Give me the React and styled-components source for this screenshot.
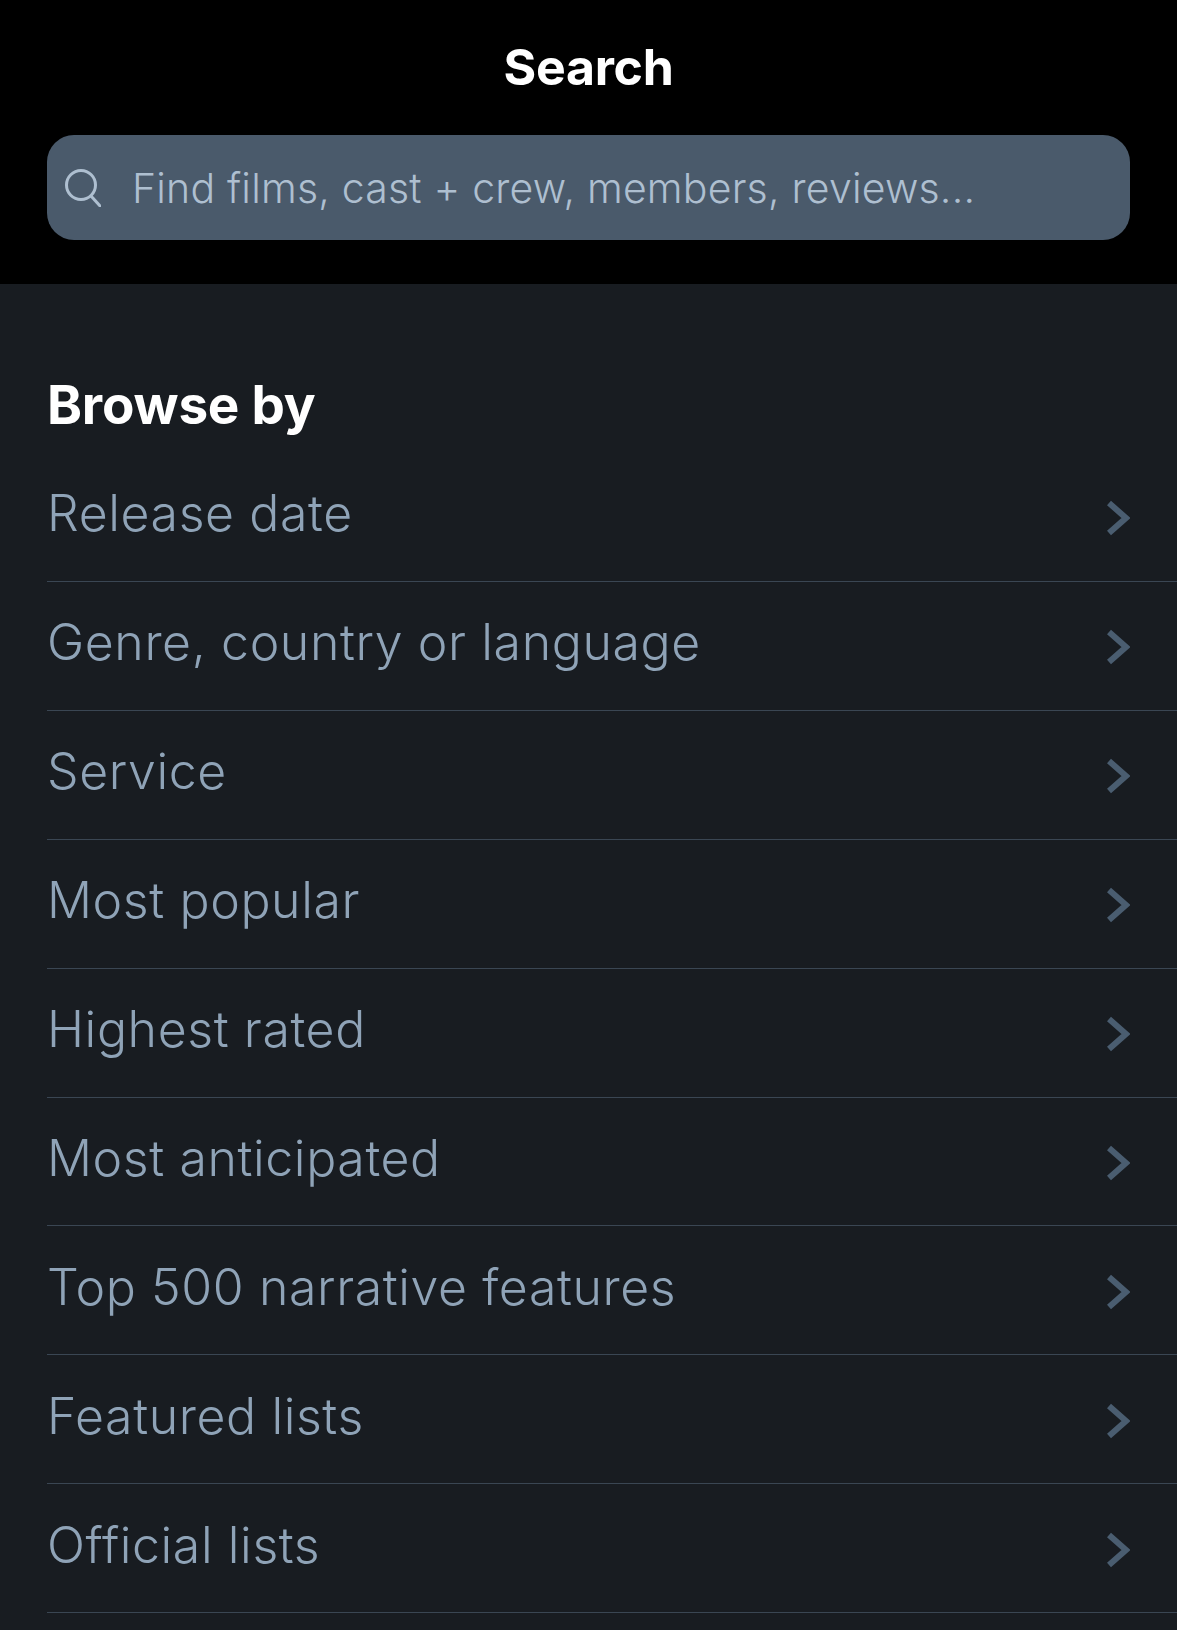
import React from 'react';
import styled, { createGlobalStyle } from 'styled-components';

const items = [
	'Release date',
	'Genre, country or language',
	'Service',
	'Most popular',
	'Highest rated',
	'Most anticipated',
	'Top 500 narrative features',
	'Featured lists',
	'Official lists',
];

const App = () => {
	return (
		<Page>
			<GlobalStyle />
			<Header>
				<Title>Search</Title>
				<SearchBar>
					<SearchIcon viewBox='0 0 36 38' fill='none'>
						<circle cx='16' cy='16' r='14.5' />
						<path d='M26 27 L36 38' />
					</SearchIcon>
					<Placeholder>Find films, cast + crew, members, reviews...</Placeholder>
				</SearchBar>
			</Header>
			<Content>
				<Heading>Browse by</Heading>
				<List>
					{items.map((item) => (
						<Row key={item}>
							<RowLabel>{item}</RowLabel>
							<Chevron viewBox='0 0 24 36' fill='none'>
								<path d='M3 3 L20 18 L3 33' />
							</Chevron>
						</Row>
					))}
				</List>
			</Content>
		</Page>
	);
};

export default App;

const GlobalStyle = createGlobalStyle`
	html, body {
		margin: 0;
		padding: 0;
		background: #181c21;
	}
`;

const Page = styled.div`
	width: 1177px;
	height: 1630px;
	overflow: hidden;
	font-family: Inter, 'Liberation Sans', sans-serif;
	background: #181c21;
`;

const Header = styled.header`
	height: 284px;
	box-sizing: border-box;
	padding-top: 35px;
	background: #000;
`;

const Title = styled.h1`
	margin: 0 0 35px;
	height: 65px;
	line-height: 65px;
	text-align: center;
	font-size: 50px;
	font-weight: 700;
	letter-spacing: -0.3px;
	color: #fff;
`;

const SearchBar = styled.div`
	display: flex;
	align-items: center;
	box-sizing: border-box;
	width: 1083px;
	height: 105px;
	margin-left: 47px;
	padding-left: 18px;
	border-radius: 27px;
	background: #4a5a6b;
`;

const SearchIcon = styled.svg`
	width: 36px;
	height: 38px;
	margin-right: 31px;
	flex-shrink: 0;

	circle,
	path {
		stroke: #aebfd0;
		stroke-width: 3;
	}
`;

const Placeholder = styled.span`
	font-size: 41px;
	font-weight: 350;
	letter-spacing: 0.2px;
	color: #aebfd0;
`;

const Content = styled.main`
	padding: 91px 0 0 47px;
`;

const Heading = styled.h2`
	margin: 0;
	height: 63px;
	line-height: 60px;
	font-size: 53px;
	font-weight: 700;
	letter-spacing: -0.2px;
	color: #fff;
`;

const List = styled.div`
	display: flex;
	flex-direction: column;
`;

const Row = styled.div`
	display: flex;
	justify-content: space-between;
	align-items: center;
	box-sizing: border-box;
	height: 128.9px;
	padding-right: 47px;
	padding-bottom: 7px;
	border-bottom: 1px solid #3a4653;

	&:first-child {
		height: 144px;
		padding-top: 7px;
		padding-bottom: 0;
	}
`;

const RowLabel = styled.span`
	font-size: 50px;
	font-weight: 350;
	letter-spacing: 0.6px;
	color: #8fa3b7;
`;

const Chevron = styled.svg`
	width: 24px;
	height: 36px;
	margin-top: 10px;
	flex-shrink: 0;

	path {
		stroke: #4a5d70;
		stroke-width: 6;
	}
`;
